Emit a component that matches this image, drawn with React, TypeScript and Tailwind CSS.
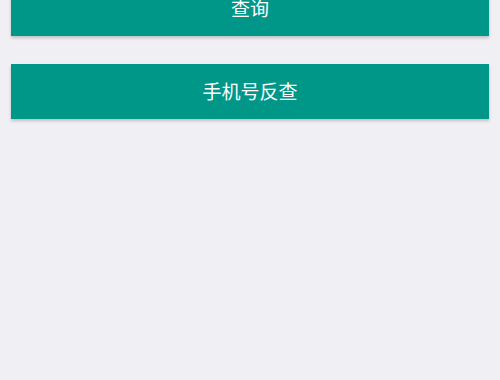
const Button = ({ label }: { label: string }) => (
  <button className="flex h-[55px] w-full items-center justify-center bg-[#009688] text-[19px] text-white shadow-[0_2px_3px_rgba(0,0,0,0.2)]">
    {label}
  </button>
)

export default function App() {
  return (
    <div
      className="h-[380px] w-[500px] overflow-hidden bg-[#efeff4]"
      style={{ fontFamily: '"Noto Sans CJK SC", "Noto Sans", sans-serif' }}
    >
      <div className="-mt-[19px] flex flex-col gap-[28px] px-[11px]">
        <Button label="查询" />
        <Button label="手机号反查" />
      </div>
    </div>
  )
}
